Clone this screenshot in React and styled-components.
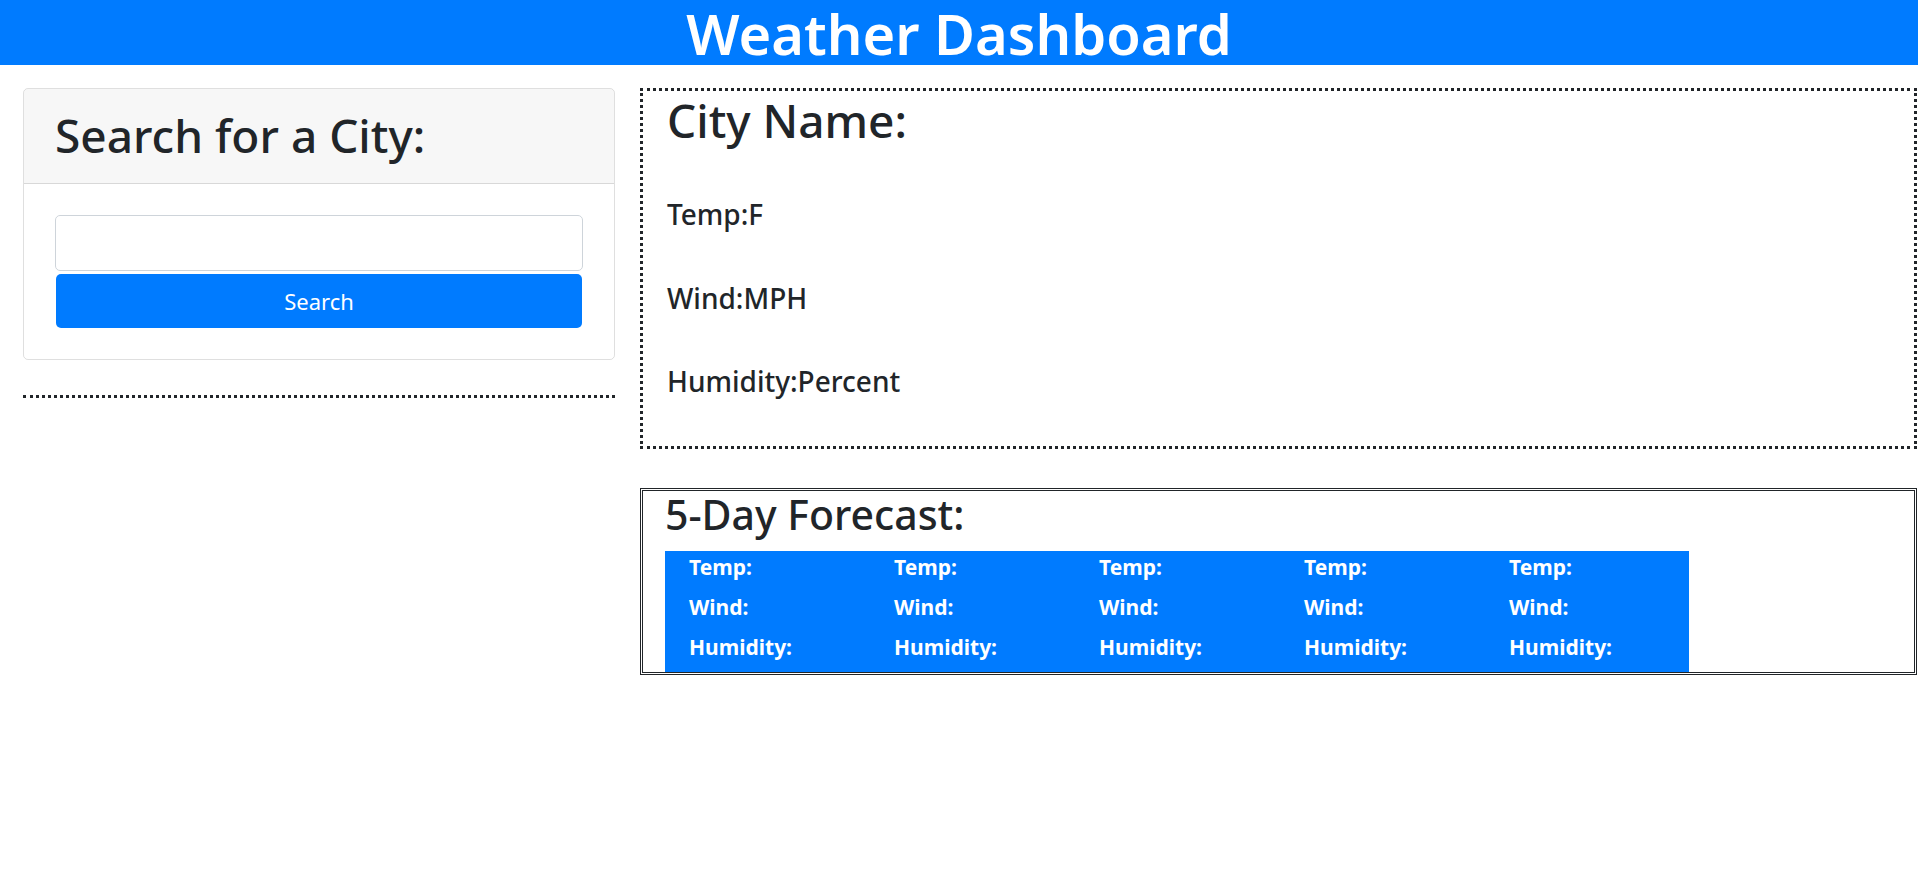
import styled, { createGlobalStyle } from "styled-components";

const GlobalStyle = createGlobalStyle`
    body {
        margin: 0;
        font-family: "Noto Sans", "Open Sans", sans-serif;
        color: #212529;
        background: #ffffff;
    }
    * {
        box-sizing: border-box;
    }
`

const Header = styled.header`
    background: #007bff;
    padding: 1px 0 0;
    text-align: center;
`

const HeaderTitle = styled.h1`
    margin: 0;
    color: #ffffff;
    font-size: 56px;
    font-weight: 600;
    line-height: 64px;
`

const Main = styled.main`
    display: flex;
    padding-top: 23px;
`

const Sidebar = styled.aside`
    width: 640px;
    flex-shrink: 0;
    padding: 0 25px 0 23px;
`

const Card = styled.div`
    border: 1px solid rgba(0, 0, 0, 0.125);
    border-radius: 5px;
    overflow: hidden;
`

const CardHeader = styled.div`
    display: flex;
    align-items: center;
    height: 95px;
    padding: 0 31px;
    background: rgba(0, 0, 0, 0.03);
    border-bottom: 1px solid rgba(0, 0, 0, 0.125);
`

const CardTitle = styled.h2`
    margin: 0;
    font-size: 46px;
    font-weight: 500;
    line-height: 1.2;
`

const CardBody = styled.form`
    display: flex;
    flex-direction: column;
    gap: 3px;
    padding: 31px;
`

const CityInput = styled.input`
    width: 100%;
    height: 56px;
    padding: 0 15px;
    font-family: inherit;
    font-size: 22px;
    border: 1px solid #ced4da;
    border-radius: 5px;
    outline: none;
`

const SearchButton = styled.button`
    height: 54px;
    margin: 0 1px;
    width: calc(100% - 2px);
    background: #007bff;
    color: #ffffff;
    border: none;
    border-radius: 5px;
    font-family: inherit;
    font-size: 22px;
    cursor: pointer;
`

const HistoryDivider = styled.hr`
    margin: 35px 0 0 0;
    border: none;
    border-top: 3px dotted #212529;
`

const Content = styled.section`
    flex: 1;
    display: flex;
    flex-direction: column;
    gap: 39px;
    padding-right: 1px;
`

const CurrentBox = styled.div`
    display: flex;
    flex-direction: column;
    gap: 50px;
    border: 3px dotted #212529;
    padding: 2px 24px 47px;
`

const CityName = styled.h1`
    margin: 0;
    font-size: 46px;
    font-weight: 500;
    line-height: 1.2;
`

const Stat = styled.h4`
    margin: 0;
    font-size: 28px;
    font-weight: 500;
    line-height: 1.2;
`

const ForecastBox = styled.div`
    border: 3px double #212529;
    padding: 3px 0 0 22px;
`

const ForecastTitle = styled.h2`
    margin: 0 0 16px;
    font-size: 41px;
    font-weight: 500;
    line-height: 1;
`

const ForecastStrip = styled.div`
    display: grid;
    grid-template-columns: repeat(5, 205px);
    width: 1024px;
    background: #007bff;
    padding: 1px 0 10px;
`

const DayCard = styled.div`
    display: flex;
    flex-direction: column;
    gap: 10px;
    padding-left: 24px;
`

const DayLine = styled.p`
    margin: 0;
    color: #ffffff;
    font-size: 21px;
    font-weight: 700;
    line-height: 30px;
`

const days = [1, 2, 3, 4, 5]

const App = () => {
    return (
        <>
            <GlobalStyle />
            <Header>
                <HeaderTitle>Weather Dashboard</HeaderTitle>
            </Header>
            <Main>
                <Sidebar>
                    <Card>
                        <CardHeader>
                            <CardTitle>Search for a City:</CardTitle>
                        </CardHeader>
                        <CardBody onSubmit={(e) => e.preventDefault()}>
                            <CityInput type={"text"} name={"city"} />
                            <SearchButton type={"submit"}>Search</SearchButton>
                        </CardBody>
                    </Card>
                    <HistoryDivider />
                </Sidebar>
                <Content>
                    <CurrentBox>
                        <CityName>City Name:</CityName>
                        <Stat>Temp:F</Stat>
                        <Stat>Wind:MPH</Stat>
                        <Stat>Humidity:Percent</Stat>
                    </CurrentBox>
                    <ForecastBox>
                        <ForecastTitle>5-Day Forecast:</ForecastTitle>
                        <ForecastStrip>
                            {days.map((day) => (
                                <DayCard key={day}>
                                    <DayLine>Temp:</DayLine>
                                    <DayLine>Wind:</DayLine>
                                    <DayLine>Humidity:</DayLine>
                                </DayCard>
                            ))}
                        </ForecastStrip>
                    </ForecastBox>
                </Content>
            </Main>
        </>
    )
}

export default App
